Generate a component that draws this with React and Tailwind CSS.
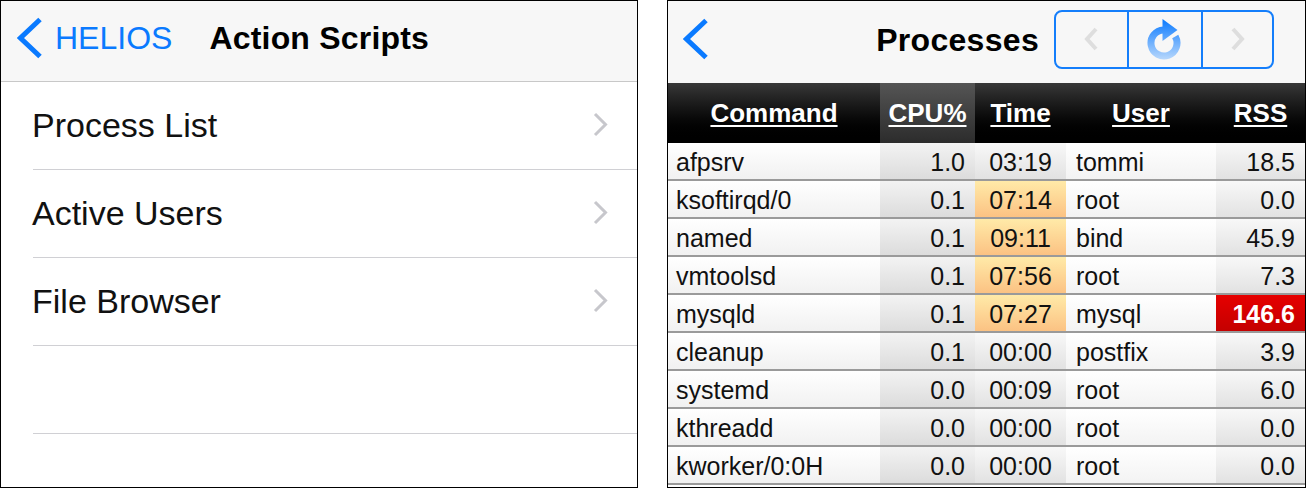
import React from "react";

const rows = [
  { cmd: "afpsrv", cpu: "1.0", time: "03:19", hot: false, user: "tommi", rss: "18.5" },
  { cmd: "ksoftirqd/0", cpu: "0.1", time: "07:14", hot: true, user: "root", rss: "0.0" },
  { cmd: "named", cpu: "0.1", time: "09:11", hot: true, user: "bind", rss: "45.9" },
  { cmd: "vmtoolsd", cpu: "0.1", time: "07:56", hot: true, user: "root", rss: "7.3" },
  { cmd: "mysqld", cpu: "0.1", time: "07:27", hot: true, user: "mysql", rss: "146.6", red: true },
  { cmd: "cleanup", cpu: "0.1", time: "00:00", hot: false, user: "postfix", rss: "3.9" },
  { cmd: "systemd", cpu: "0.0", time: "00:09", hot: false, user: "root", rss: "6.0" },
  { cmd: "kthreadd", cpu: "0.0", time: "00:00", hot: false, user: "root", rss: "0.0" },
  { cmd: "kworker/0:0H", cpu: "0.0", time: "00:00", hot: false, user: "root", rss: "0.0" },
];

const font = { fontFamily: '"Liberation Sans", Arial, sans-serif' };

function BackChevron() {
  return (
    <svg width="26" height="42" viewBox="0 0 26 42" className="shrink-0">
      <polyline points="23,2.5 3.5,21 23,39.5" fill="none" stroke="#0a7aff" strokeWidth="5" />
    </svg>
  );
}

function RowChevron() {
  return (
    <svg width="15" height="25" viewBox="0 0 15 25" className="shrink-0">
      <polyline points="2,2 12.5,12.5 2,23" fill="none" stroke="#c7c7cc" strokeWidth="3" />
    </svg>
  );
}

function SegChevron({ dir }) {
  return (
    <svg width="15" height="24" viewBox="0 0 15 24">
      <polyline
        points={dir === "left" ? "12,2 3,12 12,22" : "3,2 12,12 3,22"}
        fill="none"
        stroke="#dedede"
        strokeWidth="4"
      />
    </svg>
  );
}

function RefreshIcon() {
  return (
    <svg width="36" height="44" viewBox="0 0 36 44">
      <defs>
        <linearGradient id="rg" x1="0" y1="2" x2="0" y2="42" gradientUnits="userSpaceOnUse">
          <stop offset="0" stopColor="#0a7aff" />
          <stop offset="1" stopColor="#b5d6fc" />
        </linearGradient>
      </defs>
      <path d="M16.5 13 A13 13 0 1 0 28.26 19.5" fill="none" stroke="url(#rg)" strokeWidth="7" />
      <polygon points="15.5,2 30.5,13 15.5,24" fill="url(#rg)" />
    </svg>
  );
}

function LeftPanel() {
  const items = ["Process List", "Active Users", "File Browser", ""];
  return (
    <div className="w-[638px] h-[488px] border border-black bg-white flex flex-col shrink-0" style={font}>
      <div className="h-[81px] bg-[#f7f7f7] border-b border-[#c8c8c8] flex items-center pb-[6px]">
        <div className="ml-[16px]">
          <BackChevron />
        </div>
        <span className="ml-[12px] text-[32px] leading-none text-[#0a7aff]">HELIOS</span>
        <span className="ml-[37px] text-[32px] leading-none font-bold text-black tracking-[0.2px]">Action Scripts</span>
      </div>
      {items.map((t, i) => (
        <div key={i} className="h-[88px] shrink-0 flex flex-col">
          <div className="flex-1 flex items-center pl-[31px] pr-[29px] pb-[2px]">
            <span className="flex-1 text-[34px] leading-none text-[#111]">{t}</span>
            {t && <RowChevron />}
          </div>
          <div className="ml-[32px] h-px bg-[#d0d0d4]" />
        </div>
      ))}
    </div>
  );
}

const widths = ["w-[212px]", "w-[95px]", "w-[91px]", "w-[150px]", "w-[89px]"];

function RightPanel() {
  return (
    <div className="w-[639px] h-[488px] border border-black bg-white flex flex-col shrink-0 overflow-hidden" style={font}>
      <div className="h-[82px] shrink-0 bg-[#f7f7f7] flex items-center">
        <div className="ml-[15px] mb-[6px]">
          <BackChevron />
        </div>
        <div className="flex-1" />
        <span className="mr-[15px] mb-[5px] text-[32px] leading-none font-bold text-black tracking-[0.3px]">Processes</span>
        <div className="mr-[31px] mb-[6px] w-[220px] h-[59px] border-2 border-[#147efb] rounded-[8px] flex">
          <div className="w-[71px] flex items-center justify-center">
            <SegChevron dir="left" />
          </div>
          <div className="w-[74px] border-l-2 border-[#147efb] flex items-center justify-center">
            <RefreshIcon />
          </div>
          <div className="flex-1 border-l-2 border-[#147efb] flex items-center justify-center">
            <SegChevron dir="right" />
          </div>
        </div>
      </div>
      <div className="h-[60px] shrink-0 flex bg-linear-to-b from-[#383838] to-[#000000] text-white font-bold text-[26px] leading-none">
        <div className={`${widths[0]} flex items-center justify-center`}>
          <span className="underline decoration-2 underline-offset-[3px]">Command</span>
        </div>
        <div className={`${widths[1]} flex items-center justify-center bg-linear-to-b from-[#555555] to-[#2c2c2c]`}>
          <span className="underline decoration-2 underline-offset-[3px]">CPU%</span>
        </div>
        <div className={`${widths[2]} flex items-center justify-center`}>
          <span className="underline decoration-2 underline-offset-[3px]">Time</span>
        </div>
        <div className={`${widths[3]} flex items-center justify-center`}>
          <span className="underline decoration-2 underline-offset-[3px]">User</span>
        </div>
        <div className={`${widths[4]} flex items-center justify-center`}>
          <span className="underline decoration-2 underline-offset-[3px]">RSS</span>
        </div>
      </div>
      {rows.map((r, i) => (
        <div key={i} className="h-[38px] shrink-0 flex border-b-2 border-[#9a9a9a] text-[25px] leading-none text-[#111]">
          <div className={`${widths[0]} flex items-center pl-[8px] pt-[2px] bg-linear-to-b from-[#ffffff] to-[#f1f1f1]`}>{r.cmd}</div>
          <div className={`${widths[1]} flex items-center justify-end pr-[10px] pt-[2px] bg-linear-to-b from-[#f3f3f3] to-[#dcdcdc]`}>{r.cpu}</div>
          <div
            className={`${widths[2]} flex items-center justify-center pt-[2px] ${
              r.hot ? "bg-linear-to-b from-[#ffeaa8] to-[#fbc283]" : "bg-linear-to-b from-[#f8f8f8] to-[#e2e2e2]"
            }`}
          >
            {r.time}
          </div>
          <div className={`${widths[3]} flex items-center pl-[10px] pt-[2px] bg-linear-to-b from-[#ffffff] to-[#f3f3f3]`}>{r.user}</div>
          <div
            className={`${widths[4]} flex items-center justify-end pr-[10px] pt-[2px] ${
              r.red ? "bg-linear-to-b from-[#e60000] to-[#c40000] text-white font-bold" : "bg-linear-to-b from-[#f8f8f8] to-[#e2e2e2]"
            }`}
          >
            {r.rss}
          </div>
        </div>
      ))}
    </div>
  );
}

export default function App() {
  return (
    <div className="w-[1306px] h-[488px] bg-white flex gap-[29px] overflow-hidden">
      <LeftPanel />
      <RightPanel />
    </div>
  );
}
